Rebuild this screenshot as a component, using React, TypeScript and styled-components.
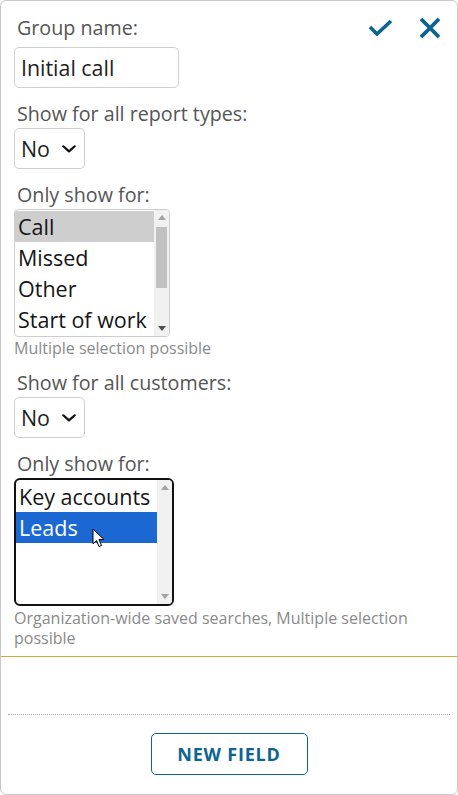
import React from "react";
import styled, { createGlobalStyle } from "styled-components";

const Global = createGlobalStyle`
  html, body { margin: 0; padding: 0; background: #fff; }
  body { font-family: "Open Sans", "Noto Sans", sans-serif; }
  * { box-sizing: border-box; }
`;

const ACCENT = "#0b6491";

const Card = styled.div`
  width: 458px;
  height: 795px;
  border: 1px solid #c9c9c9;
  border-radius: 6px;
  background: #fff;
  display: flex;
  flex-direction: column;
  overflow: hidden;
`;

const Form = styled.div`
  display: flex;
  flex-direction: column;
  align-items: flex-start;
  padding: 15px 16px 8px 13px;
`;

const HeaderRow = styled.div`
  align-self: stretch;
  display: flex;
  align-items: center;
  justify-content: space-between;
  margin-bottom: 7px;
`;

const Actions = styled.div`
  display: flex;
  align-items: center;
  gap: 26px;
`;

const IconButton = styled.button`
  border: 0;
  background: none;
  padding: 0;
  display: flex;
  color: ${ACCENT};
  cursor: pointer;
`;

const Label = styled.div<{ $top?: number }>`
  font-size: 19.7px;
  line-height: 24px;
  color: #555;
  padding-left: 3px;
  margin-top: ${(p) => p.$top ?? 0}px;
  margin-bottom: 2px;
`;

const HeaderLabel = styled(Label)`
  margin-bottom: 0;
`;

const TextInput = styled.div`
  width: 165px;
  height: 41px;
  border: 1px solid #cfcfcf;
  border-radius: 5px;
  padding-left: 6px;
  display: flex;
  align-items: center;
  font-size: 21.4px;
  color: #1e1e1e;
`;

const SelectBox = styled.div`
  width: 71px;
  height: 41px;
  border: 1px solid #cfcfcf;
  border-radius: 5px;
  padding: 0 8px 0 6px;
  display: flex;
  align-items: center;
  justify-content: space-between;
  font-size: 21.4px;
  color: #1e1e1e;
`;

const ListBox = styled.div<{ $focused?: boolean; $w: number }>`
  position: relative;
  width: ${(p) => p.$w}px;
  height: 128px;
  border: ${(p) => (p.$focused ? "2px solid #111" : "1px solid #cdcdcd")};
  border-radius: ${(p) => (p.$focused ? 6 : 4)}px;
  display: flex;
  overflow: hidden;
`;

const Options = styled.div`
  flex: 1;
  padding-top: 1px;
  display: flex;
  flex-direction: column;
`;

const Option = styled.div<{ $state?: "none" | "gray" | "blue" }>`
  height: 31px;
  line-height: 31px;
  padding-left: 3px;
  font-size: 21.5px;
  white-space: nowrap;
  overflow: hidden;
  color: ${(p) => (p.$state === "blue" ? "#fff" : "#151515")};
  background: ${(p) =>
    p.$state === "blue" ? "#1b68d3" : p.$state === "gray" ? "#cecece" : "transparent"};
`;

const Scrollbar = styled.div`
  width: 15px;
  background: #f1f1f1;
  display: flex;
  flex-direction: column;
  align-items: center;
`;

const ArrowCell = styled.div`
  height: 15px;
  width: 15px;
  display: flex;
  align-items: center;
  justify-content: center;
`;

const Track = styled.div`
  flex: 1;
  width: 100%;
  padding: 2px 2px;
`;

const Thumb = styled.div<{ $h: number }>`
  height: ${(p) => p.$h}px;
  background: #c1c1c1;
`;

const Help = styled.div<{ $top?: number }>`
  font-size: 16px;
  line-height: 20px;
  color: #8a8a8a;
  margin-top: ${(p) => p.$top ?? 1}px;
`;

const GoldRule = styled.div`
  height: 1px;
  background: #d4a73a;
`;

const Spacer = styled.div`
  flex: 1;
`;

const DottedRule = styled.div`
  margin: 0 7px;
  border-top: 1px dotted #a9a9a9;
`;

const Footer = styled.div`
  display: flex;
  justify-content: center;
  padding: 18px 0 19px;
`;

const NewFieldButton = styled.button`
  width: 157px;
  height: 42px;
  border: 1px solid ${ACCENT};
  border-radius: 5px;
  background: #fff;
  color: ${ACCENT};
  font-family: "Open Sans", "Noto Sans", sans-serif;
  font-weight: 700;
  font-size: 18px;
  letter-spacing: 0.8px;
  cursor: pointer;
`;

const Pointer = styled.svg`
  position: absolute;
  left: 76px;
  top: 48px;
`;

const Chevron = () => (
  <svg width="14" height="8" viewBox="0 0 14 8">
    <polyline points="1.3,1.3 7,6.4 12.7,1.3" fill="none" stroke="#111" strokeWidth="2.2" strokeLinecap="round" strokeLinejoin="round" />
  </svg>
);

const Tri = ({ up, color }: { up?: boolean; color: string }) => (
  <svg width="8" height="5" viewBox="0 0 8 5">
    <polygon points={up ? "0,5 8,5 4,0" : "0,0 8,0 4,5"} fill={color} />
  </svg>
);

const CheckIcon = () => (
  <svg width="25" height="18" viewBox="0 0 25 18">
    <polyline points="2,8 9,15 23,2" fill="none" stroke="currentColor" strokeWidth="3.6" />
  </svg>
);

const CloseIcon = () => (
  <svg width="22" height="20" viewBox="0 0 22 20">
    <path d="M2,1 L20,19 M20,1 L2,19" fill="none" stroke="currentColor" strokeWidth="3.8" />
  </svg>
);

export default function App() {
  return (
    <>
      <Global />
      <Card>
        <Form>
          <HeaderRow>
            <HeaderLabel>Group name:</HeaderLabel>
            <Actions>
              <IconButton aria-label="save"><CheckIcon /></IconButton>
              <IconButton aria-label="cancel"><CloseIcon /></IconButton>
            </Actions>
          </HeaderRow>
          <TextInput>Initial call</TextInput>

          <Label $top={14}>Show for all report types:</Label>
          <SelectBox>
            <span>No</span>
            <Chevron />
          </SelectBox>

          <Label $top={14}>Only show for:</Label>
          <ListBox $w={156}>
            <Options>
              <Option $state="gray">Call</Option>
              <Option>Missed</Option>
              <Option>Other</Option>
              <Option>Start of work</Option>
            </Options>
            <Scrollbar>
              <ArrowCell><Tri up color="#a3a3a3" /></ArrowCell>
              <Track><Thumb $h={61} /></Track>
              <ArrowCell><Tri color="#505050" /></ArrowCell>
            </Scrollbar>
          </ListBox>
          <Help>Multiple selection possible</Help>

          <Label $top={13}>Show for all customers:</Label>
          <SelectBox>
            <span>No</span>
            <Chevron />
          </SelectBox>

          <Label $top={14}>Only show for:</Label>
          <ListBox $w={160} $focused>
            <Options>
              <Option>Key accounts</Option>
              <Option $state="blue">Leads</Option>
            </Options>
            <Scrollbar>
              <ArrowCell><Tri up color="#a3a3a3" /></ArrowCell>
              <Track />
              <ArrowCell><Tri color="#a3a3a3" /></ArrowCell>
            </Scrollbar>
            <Pointer width="14" height="21" viewBox="0 0 14 21">
              <path d="M1,1 L1,16 L4.5,12.5 L7,18.5 L9.5,17.5 L7,11.5 L12,11.5 Z" fill="#fff" stroke="#000" strokeWidth="1" strokeLinejoin="round" />
            </Pointer>
          </ListBox>
          <Help $top={2}>Organization-wide saved searches, Multiple selection possible</Help>
        </Form>
        <GoldRule />
        <Spacer />
        <DottedRule />
        <Footer>
          <NewFieldButton>NEW FIELD</NewFieldButton>
        </Footer>
      </Card>
    </>
  );
}
